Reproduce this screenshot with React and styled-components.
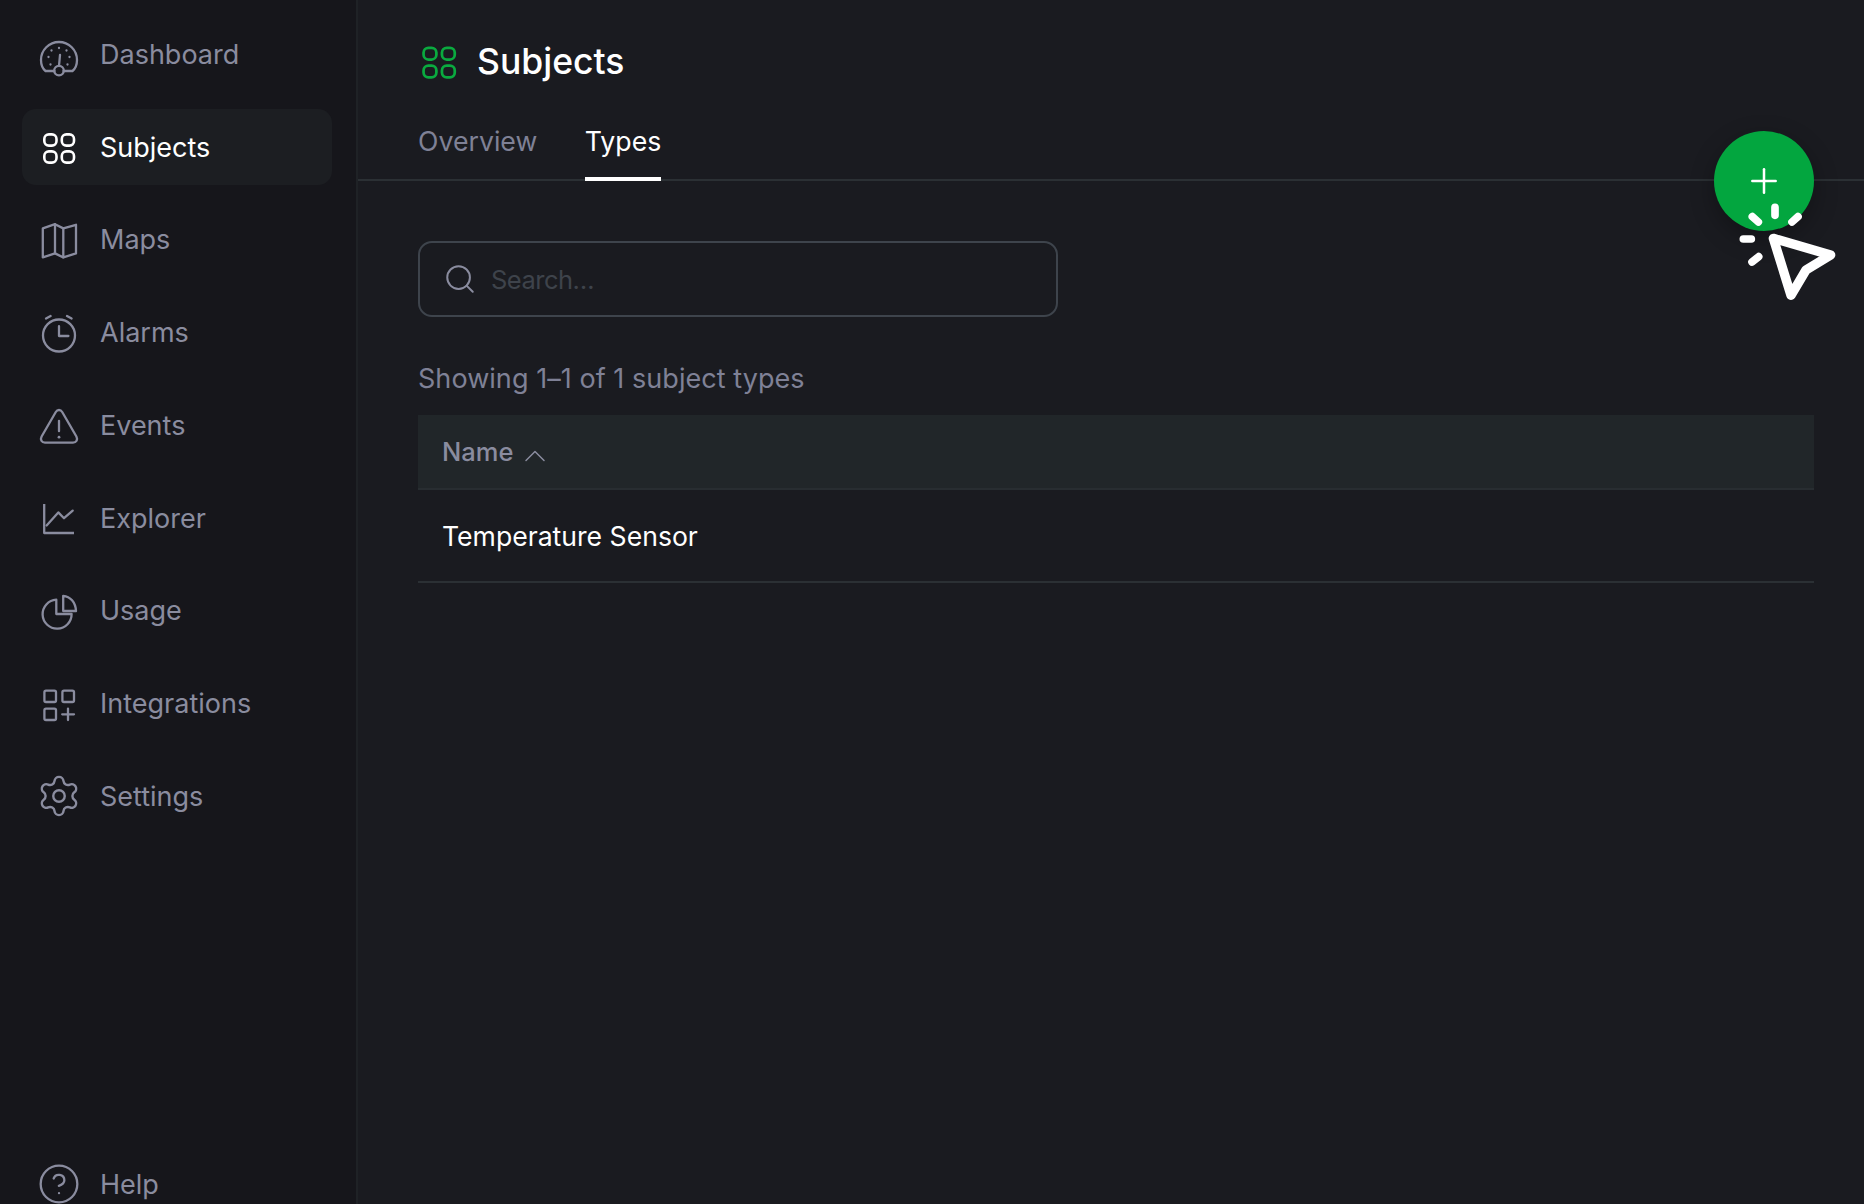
import styled, { createGlobalStyle } from 'styled-components'
import { Search, ChevronUp, Plus, Settings, CircleHelp } from 'lucide-react'

const GlobalStyle = createGlobalStyle`
  html, body {
    margin: 0;
    padding: 0;
    background: #1a1b20;
  }
  body {
    font-family: Inter, "Noto Sans", "Liberation Sans", sans-serif;
  }
`

const Page = styled.div`
  display: flex;
  width: 100%;
  height: 1204px;
  overflow: hidden;
  position: relative;
`

const Sidebar = styled.aside`
  flex: 0 0 358px;
  box-sizing: border-box;
  height: 1222px;
  padding: 16.4px 24px 0 22px;
  display: flex;
  flex-direction: column;
  justify-content: space-between;
  background: #16161b;
  border-right: 2px solid #1f2226;
`

const NavList = styled.nav`
  display: flex;
  flex-direction: column;
  gap: 16.75px;
`

const NavItem = styled.a`
  display: flex;
  align-items: center;
  gap: 21px;
  height: 76px;
  padding-left: 17px;
  border-radius: 14px;
  font-size: 27px;
  color: ${({ $active }) => ($active ? '#ffffff' : '#8a8c9f')};
  background: ${({ $active }) => ($active ? '#1c1e22' : 'transparent')};

  svg {
    flex: none;
    overflow: visible;
  }
`

const Main = styled.main`
  flex: 1;
  min-width: 0;
  display: flex;
  flex-direction: column;
  background: #1a1b20;
`

const TitleRow = styled.header`
  display: flex;
  align-items: center;
  gap: 17px;
  height: 50px;
  padding: 36px 0 0 60px;
  margin-bottom: 14px;
  color: #0aaa3f;
`

const Title = styled.h1`
  margin: 0;
  font-size: 35.5px;
  font-weight: 500;
  color: #ffffff;
`

const TabBar = styled.div`
  display: flex;
  gap: 47.500px;
  height: 79px;
  padding-left: 60px;
  border-bottom: 2px solid #2b3034;
`

const Tab = styled.a`
  box-sizing: border-box;
  height: 81px;
  padding-top: 21px;
  line-height: 40px;
  font-size: 26.7px;
  color: ${({ $active }) => ($active ? '#ffffff' : '#7f8196')};
  border-bottom: 4px solid ${({ $active }) => ($active ? '#ffffff' : 'transparent')};
`

const Content = styled.section`
  padding: 60px 50px 0 60px;
`

const SearchBox = styled.label`
  box-sizing: border-box;
  display: flex;
  align-items: center;
  gap: 14px;
  width: 640px;
  height: 76px;
  padding-left: 23px;
  border: 2px solid #3e444c;
  border-radius: 14px;
  color: #8a8c9f;
`

const SearchInput = styled.input`
  flex: 1;
  min-width: 0;
  border: 0;
  outline: 0;
  padding: 0;
  background: transparent;
  font: inherit;
  font-size: 25.5px;
  letter-spacing: -0.5px;
  color: #ffffff;

  &::placeholder {
    color: #3e434b;
    opacity: 1;
  }
`

const ResultCount = styled.p`
  margin: 42px 0 16px;
  line-height: 40px;
  font-size: 27px;
  letter-spacing: 0.05px;
  color: #7f8196;
`

const HeaderRow = styled.div`
  display: flex;
  align-items: center;
  gap: 4px;
  height: 73px;
  padding-left: 24px;
  background: #212629;
  border-bottom: 2px solid #282d31;
  font-size: 25.5px;
  font-weight: 500;
  color: #8a8c9f;

  svg {
    margin-top: 8px;
  }
`

const BodyRow = styled.div`
  display: flex;
  align-items: center;
  box-sizing: border-box;
  height: 93px;
  padding-left: 24px;
  border-bottom: 2px solid #2b3034;
  font-size: 26.6px;
  color: #ffffff;
`

const Fab = styled.button`
  position: absolute;
  top: 131px;
  right: 50px;
  width: 100px;
  height: 100px;
  padding: 0;
  display: flex;
  align-items: center;
  justify-content: center;
  border: 0;
  border-radius: 50%;
  background: #03a63f;
  color: #ffffff;
  box-shadow: 0 8px 24px rgba(0, 0, 0, 0.3);
`

const ClickCursor = styled.svg`
  position: absolute;
  top: 110px;
  right: 0;
  width: 204px;
  height: 210px;
  pointer-events: none;
`

const s = { fill: 'none', stroke: 'currentColor', strokeWidth: 2.3, strokeLinecap: 'round', strokeLinejoin: 'round' }

const Icon = ({ children, size = 40 }) => (
  <svg width={size} height={size} viewBox="0 0 40 40" {...s}>
    {children}
  </svg>
)

const GaugeIcon = () => (
  <Icon>
    <path d="M15.5 37H6.5C3.5 34.5 2 30.5 2 26a18 18 0 0 1 36 0c0 4.5-1.5 8.5-4.5 11h-9" />
    <circle cx="20" cy="36.6" r="4.8" />
    <path d="M20 31.8 21 21" />
    <path d="M20 14h.01M12.5 16.5h.01M27.5 16.5h.01M9.5 23h.01M30.5 23h.01M11.5 30.5h.01M28.5 30.5h.01" />
  </Icon>
)

const GridIcon = ({ size }) => (
  <Icon size={size}>
    <g strokeWidth="2.6">
      <rect x="5.3" y="7.4" width="12.2" height="11.2" rx="4.6" />
      <rect x="22.8" y="7.4" width="12.2" height="11.2" rx="4.6" />
      <rect x="5.3" y="24.4" width="12.2" height="11.2" rx="4.6" />
      <rect x="22.8" y="24.4" width="12.2" height="11.2" rx="4.6" />
    </g>
  </Icon>
)

const MapIcon = () => (
  <Icon>
    <path d="M3.8 8.4 16 4.2l8.3 4.2L37 4.8v28.6l-12.7 4-8.3-4-12.2 4z" />
    <path d="M16 4.2v29.2M24.3 8.4v29" />
  </Icon>
)

const AlarmIcon = () => (
  <Icon>
    <circle cx="20" cy="22.5" r="16" />
    <path d="M20 13.2V23h9.4" />
    <path d="M7 5.5l4.6-2.5M28 3l4.6 2.5" />
  </Icon>
)

const WarningIcon = () => (
  <Icon>
    <path d="M16.8 7 2.6 31.5C1 34.6 2.6 37.6 6 37.6h28c3.4 0 5-3 3.4-6.1L23.2 7c-1.6-2.7-4.8-2.7-6.4 0z" />
    <path d="M20 15.8v10.4" />
    <path d="M20 32.2h.01" strokeWidth="2.8" />
  </Icon>
)

const ChartIcon = () => (
  <Icon>
    <path d="M5.2 6v29H35" strokeLinecap="butt" />
    <path d="M7.6 27.5 19.3 14.4l5.7 5.8 8.7-7.6" />
  </Icon>
)

const PieIcon = () => (
  <Icon>
    <path d="M17.3 8.7a14.5 14.5 0 1 0 15.3 14.3H17.3z" />
    <path d="M24.2 4.8c7 .5 12.4 6.3 12.8 15.2H24.2z" />
  </Icon>
)

const AddGridIcon = () => (
  <Icon>
    <rect x="5.4" y="6.6" width="11.6" height="11.4" rx="1.6" />
    <rect x="23.4" y="6.6" width="11.6" height="11.4" rx="1.6" />
    <rect x="5.4" y="24.6" width="11.6" height="11.4" rx="1.6" />
    <path d="M23.2 30.3H35M29 24.6V36" />
  </Icon>
)

const navItems = [
  { label: 'Dashboard', icon: <GaugeIcon /> },
  { label: 'Subjects', icon: <GridIcon />, active: true },
  { label: 'Maps', icon: <MapIcon /> },
  { label: 'Alarms', icon: <AlarmIcon /> },
  { label: 'Events', icon: <WarningIcon /> },
  { label: 'Explorer', icon: <ChartIcon /> },
  { label: 'Usage', icon: <PieIcon /> },
  { label: 'Integrations', icon: <AddGridIcon /> },
  { label: 'Settings', icon: <Settings size={46} strokeWidth={1.25} style={{ margin: '0 -3px' }} /> },
]

export default function App() {
  return (
    <Page>
      <GlobalStyle />
      <Sidebar>
        <NavList>
          {navItems.map((item) => (
            <NavItem key={item.label} $active={item.active}>
              {item.icon}
              {item.label}
            </NavItem>
          ))}
        </NavList>
        <NavItem>
          <CircleHelp size={44} strokeWidth={1.25} style={{ margin: '0 -2px' }} />
          Help
        </NavItem>
      </Sidebar>
      <Main>
        <TitleRow>
          <GridIcon size={42} />
          <Title>Subjects</Title>
        </TitleRow>
        <TabBar>
          <Tab>Overview</Tab>
          <Tab $active>Types</Tab>
        </TabBar>
        <Content>
          <SearchBox>
            <Search size={34} strokeWidth={1.4} />
            <SearchInput placeholder="Search…" />
          </SearchBox>
          <ResultCount>Showing 1–1 of 1 subject types</ResultCount>
          <HeaderRow>
            Name
            <ChevronUp size={36} strokeWidth={1} />
          </HeaderRow>
          <BodyRow>Temperature Sensor</BodyRow>
        </Content>
      </Main>
      <Fab aria-label="Add">
        <Plus size={40} strokeWidth={1.5} />
      </Fab>
      <ClickCursor viewBox="0 0 612 630" fill="none" stroke="#ffffff" strokeLinecap="round" strokeLinejoin="round">
        <path d="M340 385 512 435 438 480 393 556z" strokeWidth="28" />
        <path d="M345 292v24M277 320l18 16M396 336l18-16M250 387h24M276 456l20-16" strokeWidth="23" />
      </ClickCursor>
    </Page>
  )
}
